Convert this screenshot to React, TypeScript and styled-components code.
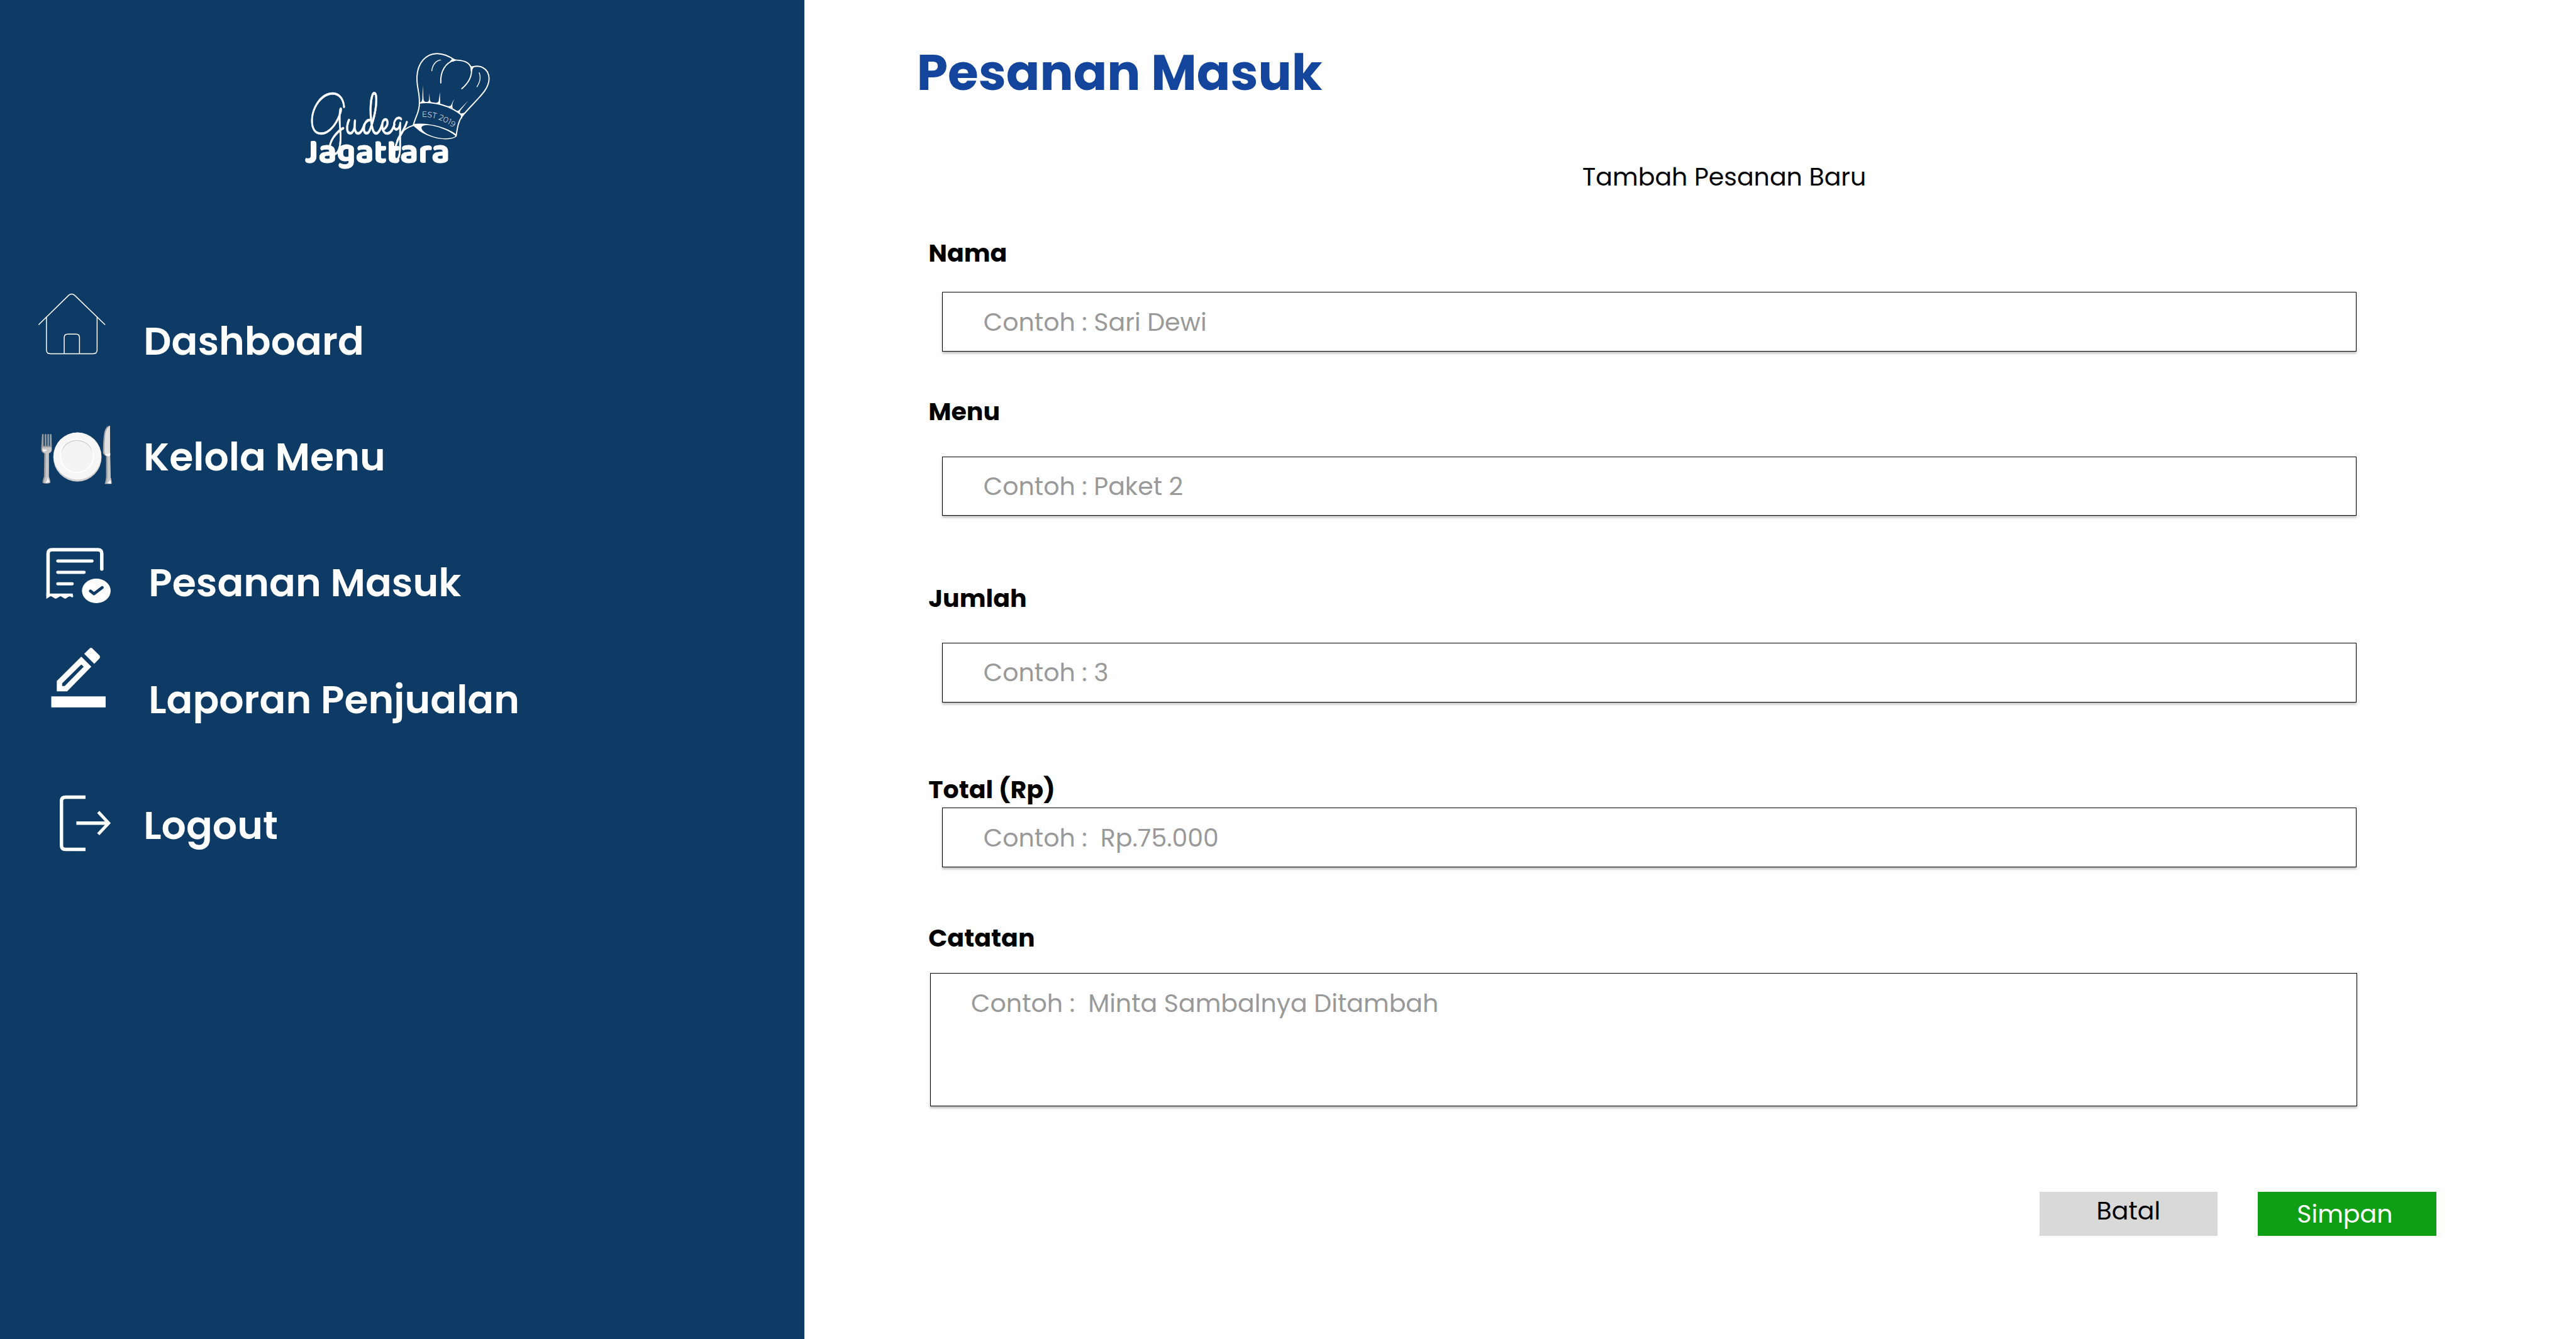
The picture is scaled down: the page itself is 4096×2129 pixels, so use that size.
import React from 'react';
import styled, { createGlobalStyle } from 'styled-components';

/* Sizes are written in design units; the artboard is 4975 units wide. */
const SCALE = 4096 / 4975;
const u = (n: number) => `${+(n * SCALE).toFixed(3)}px`;

const NAVY = '#0e3b65';

const GlobalStyle = createGlobalStyle`
  * { box-sizing: border-box; }
  html, body { margin: 0; padding: 0; background: #fefefe; }
  body { font-family: Poppins, Inter, sans-serif; }
`;

const Page = styled.div`
  display: flex;
  width: 4096px;
  height: 2129px;
  overflow: hidden;
`;

const Sidebar = styled.aside`
  flex: none;
  width: ${u(1554)};
  background: ${NAVY};
  color: #fff;
`;

const Brand = styled.div`
  height: ${u(560)};
  padding: ${u(80)} 0 0 ${u(560)};
  svg { display: block; width: ${u(420)}; height: ${u(270)}; overflow: visible; }
`;

const Nav = styled.nav`
  display: flex;
  flex-direction: column;
  padding-left: ${u(60)};
`;

const NavItem = styled.a<{ $height: number }>`
  display: flex;
  align-items: flex-start;
  height: ${p => u(p.$height)};
`;

const NavIcon = styled.svg<{ $height: number }>`
  flex: none;
  width: ${u(190)};
  height: ${p => u(p.$height)};
`;

const NavLabel = styled.span<{ $top: number; $left: number }>`
  margin: ${p => u(p.$top)} 0 0 ${p => u(p.$left)};
  font-size: ${u(75)};
  line-height: 1;
  font-weight: 600;
  white-space: nowrap;
`;

const Main = styled.main`
  flex: 1;
  padding: ${u(91.8)} ${u(200)} 0 ${u(216.5)};
`;

const Title = styled.h1`
  margin: 0;
  color: #14459c;
  font-size: ${u(96)};
  line-height: 1;
  font-weight: 700;
`;

const Subtitle = styled.p`
  margin: ${u(130.6)} 0 0 ${u(1285.4)};
  color: #000;
  font-size: ${u(48)};
  line-height: 1;
`;

const Form = styled.div`
  display: flex;
  flex-direction: column;
  padding-top: ${u(98.4)};
  padding-left: ${u(22.6)};
`;

const Field = styled.div<{ $height: number }>`
  display: flex;
  flex-direction: column;
  height: ${p => u(p.$height)};
`;

const Label = styled.label<{ $gap: number }>`
  margin-bottom: ${p => u(p.$gap)};
  color: #000;
  font-size: ${u(48)};
  line-height: 1;
  font-weight: 700;
`;

const Box = styled.div<{ $area?: boolean; $top: number }>`
  flex: none;
  margin-left: ${p => u(p.$area ? 3.2 : 26.1)};
  width: ${p => u(p.$area ? 2756.5 : 2732)};
  height: ${p => u(p.$area ? 258 : 115)};
  padding: ${p => u(p.$top)} 0 0 ${p => u(p.$area ? 78 : 79)};
  background: #fff;
  border: 1px solid #000;
  box-shadow: 0 ${u(4)} ${u(4)} rgba(0, 0, 0, 0.25);
  color: #999;
  font-size: ${u(48)};
  line-height: 1;
  white-space: pre;
`;

const Actions = styled.div`
  display: flex;
  gap: ${u(78)};
  padding-left: ${u(2168.4)};
`;

const Button = styled.button<{ $primary?: boolean }>`
  flex: none;
  display: flex;
  align-items: flex-start;
  width: ${u(344)};
  height: ${u(85)};
  padding: ${p => (p.$primary ? `${u(19)} 0 0 ${u(75.2)}` : `${u(13)} 0 0 ${u(110)}`)};
  border: 0;
  background: ${p => (p.$primary ? '#0e9f15' : '#d9d9d9')};
  color: ${p => (p.$primary ? '#fff' : '#000')};
  font-family: inherit;
  font-size: ${u(48)};
  line-height: 1;
`;

const Logo = () => (
  <svg viewBox="0 0 1260 810" fill="none" stroke="#fff" strokeLinecap="round" strokeLinejoin="round">
    <g strokeWidth="7">
      <path d="M955 107C915 80 880 69 850 70C790 72 740 120 736 205C733 262 752 290 750 355C752 405 730 430 716 482" />
      <path d="M945 107C1005 108 1040 115 1052 158C1056 205 1035 240 996 273" />
      <path d="M955 108C900 122 870 175 874 240" />
      <path d="M1050 150C1095 132 1152 150 1154 215C1152 285 1090 325 1000 430C975 462 970 500 963 548" />
      <path d="M752 356C830 345 930 370 1000 430" />
      <path d="M822 170C825 138 845 110 873 107" strokeWidth="5" />
      <path d="M1097 181C1107 208 1100 238 1084 262" strokeWidth="5" />
      <path d="M620 575C635 535 665 500 716 486" />
    </g>
    <g fill="#fff" stroke="none">
      <path d="M770 252L774 335Q776 347 788 351L752 358Q766 346 767 335Z" />
      <path d="M808 300L811 340Q814 352 826 355L790 352Q804 350 806 338Z" />
      <path d="M869 293L871 364L838 357Q858 356 862 345Z" />
      <path d="M956 331C942 350 938 372 944 387L912 374Q932 376 936 365Q942 345 956 331Z" />
      <path d="M1034 342L990 396Q980 410 990 420L958 402Q978 404 984 394Z" />
      <path d="M940 99L968 107L948 116L925 118Z" />
      <path d="M1044 138Q1054 150 1072 142Q1056 156 1056 172L1048 172Z" />
      <path d="M986 418L1016 412Q998 430 996 448Z" />
      <path fillRule="evenodd" d="M712 478C790 468 900 490 967 540L963 552C930 575 860 570 800 545C750 525 730 500 712 486ZM762 500C768 535 850 563 905 561C940 560 960 553 958 546C920 515 850 487 800 485C780 484 764 488 762 500Z" />
    </g>
    <path id="band" d="M764 437C835 434 905 462 960 510" stroke="none" />
    <g fill="#fff" stroke="none">
      <text fontFamily="Montserrat, sans-serif" fontSize="45" fontWeight="300">
        <textPath href="#band" textLength="196">EST 2019</textPath>
      </text>
      <text
        transform="translate(114 534) scale(1 1.35)"
        fontFamily="Sacramento, cursive"
        stroke="#fff"
        strokeWidth="1.5"
        textLength="555"
        lengthAdjust="spacingAndGlyphs"
      >
        <tspan fontSize="240">G</tspan><tspan fontSize="280">ude</tspan><tspan fontSize="240" dy="-14">g</tspan>
      </text>
      <text
        x="86"
        y="700"
        fontFamily="'Baloo 2', sans-serif"
        fontSize="200"
        fontWeight="700"
        textLength="840"
        lengthAdjust="spacingAndGlyphs"
        stroke="#fff"
        strokeWidth="3"
      >
        Jagattara
      </text>
    </g>
  </svg>
);

const HouseIcon = () => (
  <g fill="none" stroke="#fff" strokeWidth="1.8" strokeLinecap="round">
    <path d="M75.5 626.8L133.3 570.2Q138.9 565.6 144.5 570.2L203 626.8" />
    <path d="M90.2 612.5V676Q90.2 683.2 98 683.2H180Q188 683.2 188 676V612.5" />
    <path d="M124.5 683V652Q124.5 645.4 131 645.4H147.5Q154 645.4 154 652V683" />
  </g>
);

const PlateIcon = () => (
  <g transform="translate(60 800) scale(0.33333)">
    <ellipse cx="270" cy="247" rx="140" ry="142" fill="#cfcfcf" />
    <ellipse cx="270" cy="241" rx="138" ry="137" fill="#f6f6f6" />
    <circle cx="267" cy="240" r="96" fill="#f4f4f4" stroke="#fff" strokeWidth="7" />
    <path d="M177 228C183 122 351 122 358 228C340 128 195 128 177 228Z" fill="#cdcdcd" />
    <path d="M65 116Q69 110 74 116V182H81V116Q85 110 90 116V182H96V116Q100 110 105 116V182H110V116Q115 110 120 116L122 204Q120 220 105 226L105 360Q113 382 113 396Q92 406 68 396Q68 380 76 360L78 226Q62 220 60 204Z" fill="#9c9c9c" />
    <path d="M66 190H120V204Q118 219 104 224L104 360Q112 380 112 394Q92 401 76 395Q78 376 85 360L87 226Q68 219 66 204Z" fill="#c7c7c7" />
    <path d="M68 200Q80 204 94 203Q86 216 76 215Q68 212 68 200ZM97 364L107 390Q98 398 86 394Q96 385 97 364Z" fill="#fff" />
    <path d="M459 65Q436 64 426 103Q418 140 418 225Q424 235 436 242V362Q434 384 428 403H467L469 398Q468 382 463 364L460 240Z" fill="#a3a3a3" />
    <path d="M459 67Q442 72 433 105Q427 145 427 222L445 240V362Q443 384 436 401H467Q468 380 462 364L459 238Z" fill="#c8c8c8" />
    <path d="M459 67Q442 72 433 105Q427 145 427 224L459 238Z" fill="#e1e1e1" />
    <path d="M430 226Q446 234 460 222V238Q448 248 432 236ZM458 376Q464 392 464 400Q452 402 444 396Q456 392 458 376Z" fill="#fff" />
  </g>
);

const ReceiptIcon = () => (
  <g transform="translate(70 1040) scale(0.33333)" fill="none" stroke="#fff" strokeLinecap="round">
    <path d="M381 178V88Q381 66 357 66H94Q70 66 70 88V334" strokeWidth="20" strokeLinecap="butt" />
    <circle cx="381" cy="178" r="10" fill="#fff" stroke="none" />
    <path d="M60 320H212L216 338Q212 344 206 341Q196 332 187 339L175 347Q169 351 163 347L148 338Q142 333 136 338L120 347Q114 351 108 347L93 338Q86 333 79 338L60 351Z" fill="#fff" stroke="none" />
    <path d="M126 131H325M126 197H279M126 263H210" strokeWidth="18" />
    <ellipse cx="349.5" cy="304" rx="83" ry="71" fill="#fff" stroke="none" />
    <path d="M315 305L336 321L384 285" stroke={NAVY} strokeWidth="17" strokeLinejoin="round" />
  </g>
);

const PencilIcon = () => (
  <g transform="translate(70.5 1040) scale(0.33333)" fill="#fff">
    <path fillRule="evenodd" d="M119 825L261 684L319 742L179 885H119ZM150 839V854H165L275 742L261 729Z" />
    <path d="M278 667L308 638Q317 628 327 638L364 675Q374 685 366 695L336 726Z" />
    <path d="M87 914H402V978H87Z" />
  </g>
);

const LogoutIcon = () => (
  <g fill="none" stroke="#fff">
    <path d="M165.6 1539.4H127Q119.2 1539.4 119.2 1547V1632.6Q119.2 1640.2 127 1640.2H165.6" strokeWidth="6.6" />
    <path d="M148 1589.5H209" strokeWidth="6.8" />
    <path d="M190.3 1568L210.3 1589.5L190.3 1611" strokeWidth="6" />
  </g>
);

const navItems = [
  { label: 'Dashboard', y: 560, height: 240, top: 62.2, left: 27.3, Icon: HouseIcon },
  { label: 'Kelola Menu', y: 800, height: 240, top: 45.9, left: 27.3, Icon: PlateIcon },
  { label: 'Pesanan Masuk', y: 1040, height: 200, top: 48.3, left: 36.9, Icon: ReceiptIcon },
  { label: 'Laporan Penjualan', y: 1240, height: 260, top: 73.9, left: 36.9, Icon: PencilIcon },
  { label: 'Logout', y: 1500, height: 200, top: 57, left: 27.3, Icon: LogoutIcon },
];

const fields = [
  { label: 'Nama', height: 307, gap: 51, hint: 'Contoh : Sari Dewi', top: 33.7 },
  { label: 'Menu', height: 359.9, gap: 61.8, hint: 'Contoh : Paket 2', top: 33.2 },
  { label: 'Jumlah', height: 369.1, gap: 61.9, hint: 'Contoh : 3', top: 33.2 },
  { label: 'Total (Rp)', height: 286.8, gap: 11, hint: 'Contoh :  Rp.75.000', top: 33.4 },
  { label: 'Catatan', height: 514.6, gap: 43, hint: 'Contoh :  Minta Sambalnya Ditambah', top: 33.9, area: true },
];

export default function App() {
  return (
    <>
      <GlobalStyle />
      <Page>
        <Sidebar>
          <Brand><Logo /></Brand>
          <Nav>
            {navItems.map(({ label, y, height, top, left, Icon }) => (
              <NavItem key={label} $height={height}>
                <NavIcon $height={height} viewBox={`60 ${y} 190 ${height}`}><Icon /></NavIcon>
                <NavLabel $top={top} $left={left}>{label}</NavLabel>
              </NavItem>
            ))}
          </Nav>
        </Sidebar>
        <Main>
          <Title>Pesanan Masuk</Title>
          <Subtitle>Tambah Pesanan Baru</Subtitle>
          <Form>
            {fields.map(f => (
              <Field key={f.label} $height={f.height}>
                <Label $gap={f.gap}>{f.label}</Label>
                <Box $area={f.area} $top={f.top}>{f.hint}</Box>
              </Field>
            ))}
          </Form>
          <Actions>
            <Button>Batal</Button>
            <Button $primary>Simpan</Button>
          </Actions>
        </Main>
      </Page>
    </>
  );
}
